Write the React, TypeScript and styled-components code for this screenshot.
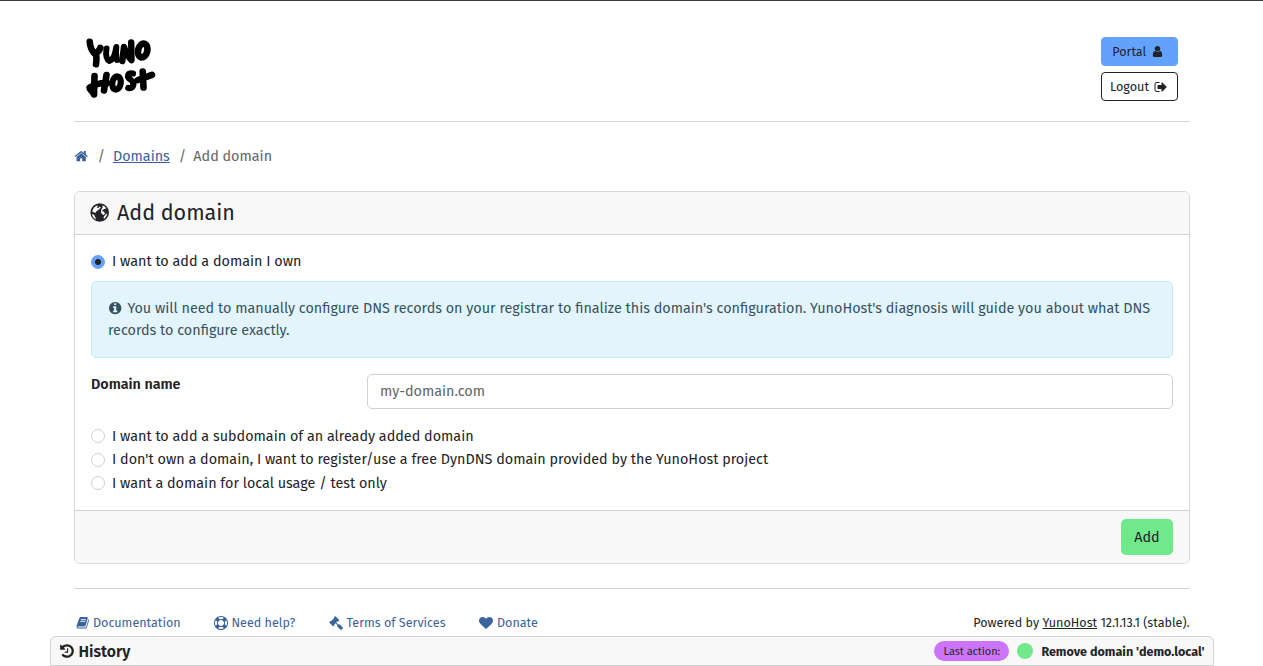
import React from "react";
import styled, { createGlobalStyle } from "styled-components";

const Global = createGlobalStyle`
  *, *::before, *::after { box-sizing: border-box; }
  html, body { margin: 0; height: 100%; overflow: hidden; }
  body {
    background: #fff;
    color: #222327;
    font: 400 14.37px/22px "Fira Sans", "Noto Sans", sans-serif;
  }
  #root { height: 100%; }
`;

const paths = {
  home: "M1472 992v480q0 26-19 45t-45 19h-384v-384h-256v384h-384q-26 0-45-19t-19-45v-480q0-1 .5-3t.5-3l575-474 575 474q1 2 1 6zm223-69l-62 74q-8 9-21 11h-3q-13 0-21-7l-692-577-692 577q-12 8-24 7-13-2-21-11l-62-74q-8-10-7-23.500t11-21.500l719-599q32-26 76-26t76 26l244 204v-195q0-14 9-23t23-9h192q14 0 23 9t9 23v408l219 182q10 8 11 21.500t-7 23.500z",
  user: "M1536 1399q0 109-62.500 187t-150.500 78h-854q-88 0-150.500-78t-62.500-187q0-85 8.500-160.500t31.500-152 58.500-131 94-89 134.500-34.500q131 128 313 128t313-128q76 0 134.500 34.500t94 89 58.500 131 31.500 152 8.500 160.500zm-256-887q0 159-112.500 271.500t-271.500 112.500-271.500-112.500-112.500-271.500 112.500-271.500 271.500-112.500 271.500 112.500 112.500 271.500z",
  signOut: "M704 1440q0 4 1 20t.5 26.500-3 23.500-10 19.500-20.500 6.500h-320q-119 0-203.500-84.500t-84.500-203.500v-704q0-119 84.500-203.500t203.500-84.500h320q13 0 22.500 9.500t9.500 22.500q0 4 1 20t.5 26.500-3 23.500-10 19.500-20.500 6.500h-320q-66 0-113 47t-47 113v704q0 66 47 113t113 47h312l11.500 1 11.500 3 8 5.500 7 9 2 13.500zm928-544q0 26-19 45l-544 544q-19 19-45 19t-45-19-19-45v-288h-448q-26 0-45-19t-19-45v-384q0-26 19-45t45-19h448v-288q0-26 19-45t45-19 45 19l544 544q19 19 19 45z",
  info: "M1152 1376v-160q0-14-9-23t-23-9h-96v-512q0-14-9-23t-23-9h-320q-14 0-23 9t-9 23v160q0 14 9 23t23 9h96v320h-96q-14 0-23 9t-9 23v160q0 14 9 23t23 9h448q14 0 23-9t9-23zm-128-896v-160q0-14-9-23t-23-9h-192q-14 0-23 9t-9 23v160q0 14 9 23t23 9h192q14 0 23-9t9-23zm640 416q0 209-103 385.500t-279.500 279.500-385.500 103-385.500-103-279.500-279.500-103-385.500 103-385.500 279.500-279.500 385.500-103 385.500 103 279.500 279.500 103 385.500z",
  heart: "M896 1664q-26 0-44-18l-624-602q-10-8-27.500-26t-55.500-65.500-68-97.500-53.500-121-23.500-138q0-220 127-344t351-124q62 0 126.500 21.500t120 58 95.500 68.500 76 68q36-36 76-68t95.500-68.500 120-58 126.500-21.500q224 0 351 124t127 344q0 221-229 450l-623 600q-18 18-44 18z",
  history: "M1664 896q0 156-61 298t-164 245-245 164-298 61q-172 0-327-72.500t-264-204.500q-7-10-6.500-22.500t8.500-20.500l137-138q10-9 25-9 16 2 23 12 73 95 179 147t225 52q104 0 198.500-40.500t163.500-109.500 109.500-163.500 40.500-198.500-40.500-198.500-109.500-163.500-163.500-109.500-198.500-40.500q-98 0-188 35.500t-160 101.500l137 138q31 30 14 69-17 40-59 40h-448q-26 0-45-19t-19-45v-448q0-42 40-59 39-17 69 14l130 129q107-101 244.500-156.500t284.500-55.500q156 0 298 61t245 164 164 245 61 298zm-640-288v448q0 14-9 23t-23 9h-320q-14 0-23-9t-9-23v-64q0-14 9-23t23-9h224v-352q0-14 9-23t23-9h64q14 0 23 9t9 23z",
  lifeRing: "M896 0q182 0 348 71t286 191 191 286 71 348-71 348-191 286-286 191-348 71-348-71-286-191-191-286-71-348 71-348 191-286 286-191 348-71zm0 128q-190 0-361 90l194 194q82-28 167-28t167 28l194-194q-171-90-361-90zm-678 1129l194-194q-28-82-28-167t28-167l-194-194q-90 171-90 361t90 361zm678 407q190 0 361-90l-194-194q-82 28-167 28t-167-28l-194 194q171 90 361 90zm0-384q159 0 271.500-112.500t112.500-271.500-112.500-271.500-271.500-112.500-271.500 112.500-112.500 271.500 112.500 271.500 271.500 112.500zm484-217l194 194q90-171 90-361t-90-361l-194 194q28 82 28 167t-28 167z",
  book: "M1703 478q40 57 18 129l-275 906q-19 64-76.500 107.500t-122.500 43.500h-923q-77 0-148.500-53.500t-99.500-131.500q-24-67-2-127 0-4 3-27t4-37q1-8-3-21.500t-3-19.500q2-11 8-21t16.500-23.500 16.500-23.500q23-38 45-91.500t30-91.500q3-10 .5-30t-.5-28q3-11 17-28t17-23q21-36 42-92t25-90q1-9-2.500-32t.5-28q4-13 22-30.500t22-22.500q19-26 42.500-84.500t27.500-96.500q1-8-3-25.500t-2-26.500q2-8 9-18t18-23 17-21q8-12 16.500-30.500t15-35 16-36 19.500-32 26.500-23.500 36-11.500 47.500 5.500l-1 3q38-9 51-9h761q74 0 114 56t18 130l-274 906q-36 119-71.500 153.500t-128.500 34.500h-869q-27 0-38 15-11 16-1 43 24 70 144 70h923q29 0 56-15.500t35-41.500l300-987q7-22 5-57 38 15 59 43zm-1064 2q-4 13 2 22.500t20 9.500h608q13 0 25.500-9.500t16.500-22.500l21-64q4-13-2-22.500t-20-9.500h-608q-13 0-25.500 9.500t-16.500 22.500zm-83 256q-4 13 2 22.500t20 9.500h608q13 0 25.500-9.500t16.500-22.500l21-64q4-13-2-22.500t-20-9.500h-608q-13 0-25.500 9.500t-16.500 22.500z",
  gavel: "M1771 1536q0 53-37 90l-107 108q-39 37-91 37-53 0-90-37l-363-364q-38-36-38-90 0-53 43-96l-256-256-126 126q-14 14-34 14t-34-14q2 2 12.500 12t12.500 13 10 11.500 10 13.500 6 13.500 5.500 16.500 1.500 18q0 38-28 68-3 3-16.500 18t-19 20.500-18.500 16.500-22 15.500-22 9-26 4.500q-40 0-68-28l-408-408q-28-28-28-68 0-13 4.500-26t9-22 15.500-22 16.500-18.500 20.500-19 18-16.500q30-28 68-28 10 0 18 1.500t16.500 5.500 13.500 6 13.500 10 11.500 10 13 12.500 12 12.500q-14-14-14-34t14-34l348-348q14-14 34-14t34 14q-2-2-12.500-12t-12.500-13-10-11.500-10-13.500-6-13.500-5.500-16.500-1.500-18q0-38 28-68 3-3 16.500-18t19-20.500 18.500-16.500 22-15.500 22-9 26-4.500q40 0 68 28l408 408q28 28 28 68 0 13-4.500 26t-9 22-15.500 22-16.500 18.500-20.500 19-18 16.500q-30 28-68 28-10 0-18-1.500t-16.500-5.500-13.500-6-13.500-10-11.500-10-13-12.500-12-12.500q14 14 14 34t-14 34l-126 126 256 256q43-43 96-43 52 0 91 37l363 363q37 39 37 91z",
};

const Glyph = styled.svg<{ $size: number }>`
  flex: none;
  width: ${(p) => p.$size}px;
  height: ${(p) => p.$size}px;
  fill: currentColor;
`;

function Icon({ name, size = 14 }: { name: keyof typeof paths; size?: number }) {
  return (
    <Glyph $size={size} viewBox="0 0 1792 1792" aria-hidden="true">
      <path d={paths[name]} />
    </Glyph>
  );
}

function Globe() {
  return (
    <Glyph $size={20} viewBox="0 0 20 20" aria-hidden="true">
      <circle cx="9.700" cy="9.500" r="9.300" />
      <g fill="#f8f8f8">
        <path d="M2.200 8.500C2.800 5.600 4.500 3.400 7 2.400L8 3 6.500 4.300 8.600 5 9.300 3.600 10.800 4.200 9.600 6 7.800 7.200 6.200 8.600 5.400 10 3.800 9.200Z" />
        <path d="M2 10.800L4.300 12 5.200 14 6 16.800C3.600 15.500 2.200 13.300 2 10.800Z" />
        <path d="M12.200 2.500L14.500 3.300 16.300 5.200 14.500 6 12.600 6.900 12 8.300 13.800 8.600 15 10.200 14 12 12 11.200 10.900 9 11.300 6.500 12.700 4.500Z" />
        <path d="M16 11L17.300 10.500 16.500 13 14.700 15.400 13.600 15.800 13.800 13.800Z" />
      </g>
    </Glyph>
  );
}

/* Single-line text run */
const Label = styled.span`
  white-space: nowrap;
`;

/* Label seated one pixel lower than the centre of its row */
const LowLabel = styled(Label)`
  display: inline-block;
  padding-top: 2px;
`;

const Page = styled.div`
  display: flex;
  flex-direction: column;
  height: 100%;
  border-top: 1px solid #3a3a3a;
`;

const Container = styled.div`
  flex: 1;
  min-height: 0;
  width: 1116px;
  margin-left: 74px;
`;

const Header = styled.header`
  display: flex;
  justify-content: space-between;
  height: 121px;
  padding: 36px 12px 0;
  border-bottom: 1px solid #d3d3d4;
`;

const Logo = styled.svg`
  width: 70px;
  height: 62px;
  fill: none;
  stroke: #000;
  stroke-linecap: round;
  stroke-linejoin: round;
`;

const HeaderActions = styled.div`
  display: flex;
  flex-direction: column;
  gap: 6px;
`;

const HeaderButton = styled.button<{ $filled?: boolean }>`
  display: flex;
  align-items: center;
  justify-content: center;
  gap: 5px;
  width: 77px;
  height: 29px;
  padding: 0 ${(p) => (p.$filled ? 2.5 : 1)}px 0 0;
  border: 1px solid ${(p) => (p.$filled ? "#62a2fc" : "#222327")};
  border-radius: 4px;
  background: ${(p) => (p.$filled ? "#62a2fc" : "#fff")};
  color: #222327;
  font: inherit;
  font-size: 12.6px;
`;

const Breadcrumb = styled.nav`
  display: flex;
  align-items: center;
  height: 22px;
  margin: 23px 0 24px;
  color: #636468;
`;

const Separator = styled.span<{ $width: number }>`
  width: ${(p) => p.$width}px;
  padding: 2px 0 0 9px;
`;

const Anchor = styled.a`
  display: flex;
  align-items: center;
  color: #3a629c;
  text-decoration: none;
`;

const CrumbLink = styled.a`
  padding-top: 2px;
  color: #3a629c;
  text-decoration: underline;
`;

const Card = styled.section`
  border: 1px solid #d9d9da;
  border-radius: 6px;
  overflow: hidden;
`;

const CardHeader = styled.h2`
  display: flex;
  align-items: center;
  gap: 7px;
  height: 43px;
  margin: 0;
  padding-left: 15px;
  border-bottom: 1px solid #d3d3d4;
  background: #f8f8f8;
  font-size: 21.5px;
  font-weight: 400;
`;

const CardBody = styled.div`
  height: 275px;
  padding: 15px 16px;
`;

const RadioRow = styled.label<{ $height?: number }>`
  display: flex;
  align-items: center;
  gap: 7px;
  height: ${(p) => p.$height ?? 23.5}px;
`;

const RadioMark = styled.span<{ $checked?: boolean }>`
  width: 14px;
  height: 14px;
  margin-top: 1px;
  border: 1px solid ${(p) => (p.$checked ? "#62a2fc" : "#d0d0d1")};
  border-radius: 50%;
  background: ${(p) => (p.$checked ? "radial-gradient(circle, #222327 0 2.7px, #62a2fc 3.4px)" : "#fff")};
`;

const Alert = styled.div`
  height: 77px;
  margin: 8px 0 16px;
  padding: 15px 16px;
  border: 1px solid #c4eafb;
  border-radius: 5px;
  background: #e4f4fd;
  color: #35535f;
`;

const AlertLine = styled.div`
  display: flex;
  align-items: center;
  gap: 5px;
  height: 22px;
`;

const Field = styled.div`
  display: flex;
  margin-bottom: 15px;
`;

const FieldName = styled.label`
  width: 276px;
  height: 22px;
  line-height: 22px;
  font-size: 14.3px;
  font-weight: 600;
`;

const Input = styled.input`
  flex: 1;
  height: 35px;
  padding: 0 12px;
  border: 1px solid #d0d0d1;
  border-radius: 5px;
  font: inherit;
  &::placeholder { color: #636468; opacity: 1; }
`;

const CardFooter = styled.div`
  display: flex;
  justify-content: flex-end;
  height: 53px;
  padding: 8px 16px;
  border-top: 1px solid #d3d3d4;
  background: #f8f8f8;
`;

const AddButton = styled.button`
  width: 52px;
  height: 36px;
  padding: 0;
  border: 0;
  border-radius: 5px;
  background: #70e98b;
  color: #222327;
  font: inherit;
`;

const Footer = styled.footer`
  display: flex;
  align-items: center;
  height: 48px;
  margin-top: 24px;
  padding: 20px 0.5px 0 1.5px;
  border-top: 1px solid #d3d3d4;
  font-size: 12.57px;
`;

const FooterLink = styled(Anchor)<{ $width: number }>`
  gap: 4px;
  width: ${(p) => p.$width}px;
`;

const Powered = styled.div`
  margin-left: auto;
`;

const HistoryBar = styled.section`
  display: flex;
  align-items: center;
  flex: none;
  width: 1164px;
  height: 30px;
  margin-left: 50px;
  padding: 0 8.5px 0 8px;
  border: 1px solid #d3d3d4;
  border-radius: 6px 6px 0 0;
  background: #f8f8f8;
`;

const HistoryTitle = styled.h3`
  display: flex;
  align-items: center;
  gap: 3.5px;
  margin: 0;
  font-size: 15.8px;
  font-weight: 600;
`;

const LastAction = styled.div`
  display: flex;
  align-items: center;
  margin-left: auto;
  font-size: 12.57px;
  font-weight: 700;
`;

const Badge = styled.span`
  display: flex;
  align-items: center;
  justify-content: center;
  width: 75px;
  height: 20px;
  border-radius: 10px;
  background: #cc74fc;
  font-size: 10.9px;
  font-weight: 400;
`;

const Status = styled.span`
  width: 16px;
  height: 16px;
  margin: 0 8px;
  border-radius: 50%;
  background: #70e98b;
`;

export default function App() {
  return (
    <Page>
      <Global />
      <Container>
        <Header>
          <Logo viewBox="0 0 70 62" role="img" aria-label="YunoHost">
            <g strokeWidth="6.600">
              <path d="M3.700 4.800Q4.500 13 8.500 16.500Q13 15 14.300 11M9.700 16Q11 20 10 27.300" />
              <path d="M20.500 11.500Q19 22 23.500 24Q28.500 22.500 30.300 10Q29.500 18 31 23" strokeWidth="6" />
              <path d="M36.300 24L38 10Q41 19 45.500 23L45.200 5.500" strokeWidth="6.400" />
              <ellipse cx="56.700" cy="13.500" rx="4.600" ry="7" transform="rotate(14 56.700 13.500)" />
              <path d="M8.500 39L8 57.500M20.500 38L18 53.500M3.700 50.500Q12 45.500 21 46M4 52L8 57" />
              <ellipse cx="30.500" cy="46" rx="4.200" ry="6.600" transform="rotate(10 30.500 46)" strokeWidth="6.200" />
              <path d="M47 36.500C41 36 40.500 40 45 43C49.500 46 47 52.500 42.300 51" strokeWidth="6.200" />
              <path d="M56.700 34.500L57.500 50.500M52 43L66 37.800" />
            </g>
          </Logo>
          <HeaderActions>
            <HeaderButton $filled>
              <Label>Portal</Label>
              <Icon name="user" size={13} />
            </HeaderButton>
            <HeaderButton>
              <Label>Logout</Label>
              <Icon name="signOut" />
            </HeaderButton>
          </HeaderActions>
        </Header>

        <Breadcrumb>
          <Anchor href="#" aria-label="Home"><Icon name="home" size={14.4} /></Anchor>
          <Separator $width={24.5}>/</Separator>
          <CrumbLink href="#">Domains</CrumbLink>
          <Separator $width={23.5}>/</Separator>
          <LowLabel>Add domain</LowLabel>
        </Breadcrumb>

        <Card>
          <CardHeader>
            <Globe />
            <Label>Add domain</Label>
          </CardHeader>
          <CardBody>
            <RadioRow $height={23}>
              <RadioMark $checked />
              <Label>I want to add a domain I own</Label>
            </RadioRow>
            <Alert>
              <AlertLine>
                <Icon name="info" size={14.4} />
                <LowLabel>You will need to manually configure DNS records on your registrar to finalize this domain's configuration. YunoHost's diagnosis will guide you about what DNS</LowLabel>
              </AlertLine>
              <AlertLine>
                <LowLabel>records to configure exactly.</LowLabel>
              </AlertLine>
            </Alert>
            <Field>
              <FieldName htmlFor="domain">Domain name</FieldName>
              <Input id="domain" placeholder="my-domain.com" />
            </Field>
            <RadioRow>
              <RadioMark />
              <LowLabel>I want to add a subdomain of an already added domain</LowLabel>
            </RadioRow>
            <RadioRow>
              <RadioMark />
              <LowLabel>I don't own a domain, I want to register/use a free DynDNS domain provided by the YunoHost project</LowLabel>
            </RadioRow>
            <RadioRow>
              <RadioMark />
              <LowLabel>I want a domain for local usage / test only</LowLabel>
            </RadioRow>
          </CardBody>
          <CardFooter>
            <AddButton><LowLabel>Add</LowLabel></AddButton>
          </CardFooter>
        </Card>

        <Footer>
          <FooterLink href="#" $width={138}><Icon name="book" size={13.5} /><Label>Documentation</Label></FooterLink>
          <FooterLink href="#" $width={115}><Icon name="lifeRing" /><Label>Need help?</Label></FooterLink>
          <FooterLink href="#" $width={150.5}><Icon name="gavel" /><Label>Terms of Services</Label></FooterLink>
          <FooterLink href="#" $width={80}><Icon name="heart" /><Label>Donate</Label></FooterLink>
          <Powered><Label>Powered by <u>YunoHost</u> 12.1.13.1 (stable).</Label></Powered>
        </Footer>
      </Container>

      <HistoryBar>
        <HistoryTitle><Icon name="history" size={16} /><LowLabel>History</LowLabel></HistoryTitle>
        <LastAction>
          <Badge><LowLabel>Last action:</LowLabel></Badge>
          <Status />
          <LowLabel>Remove domain 'demo.local'</LowLabel>
        </LastAction>
      </HistoryBar>
    </Page>
  );
}
